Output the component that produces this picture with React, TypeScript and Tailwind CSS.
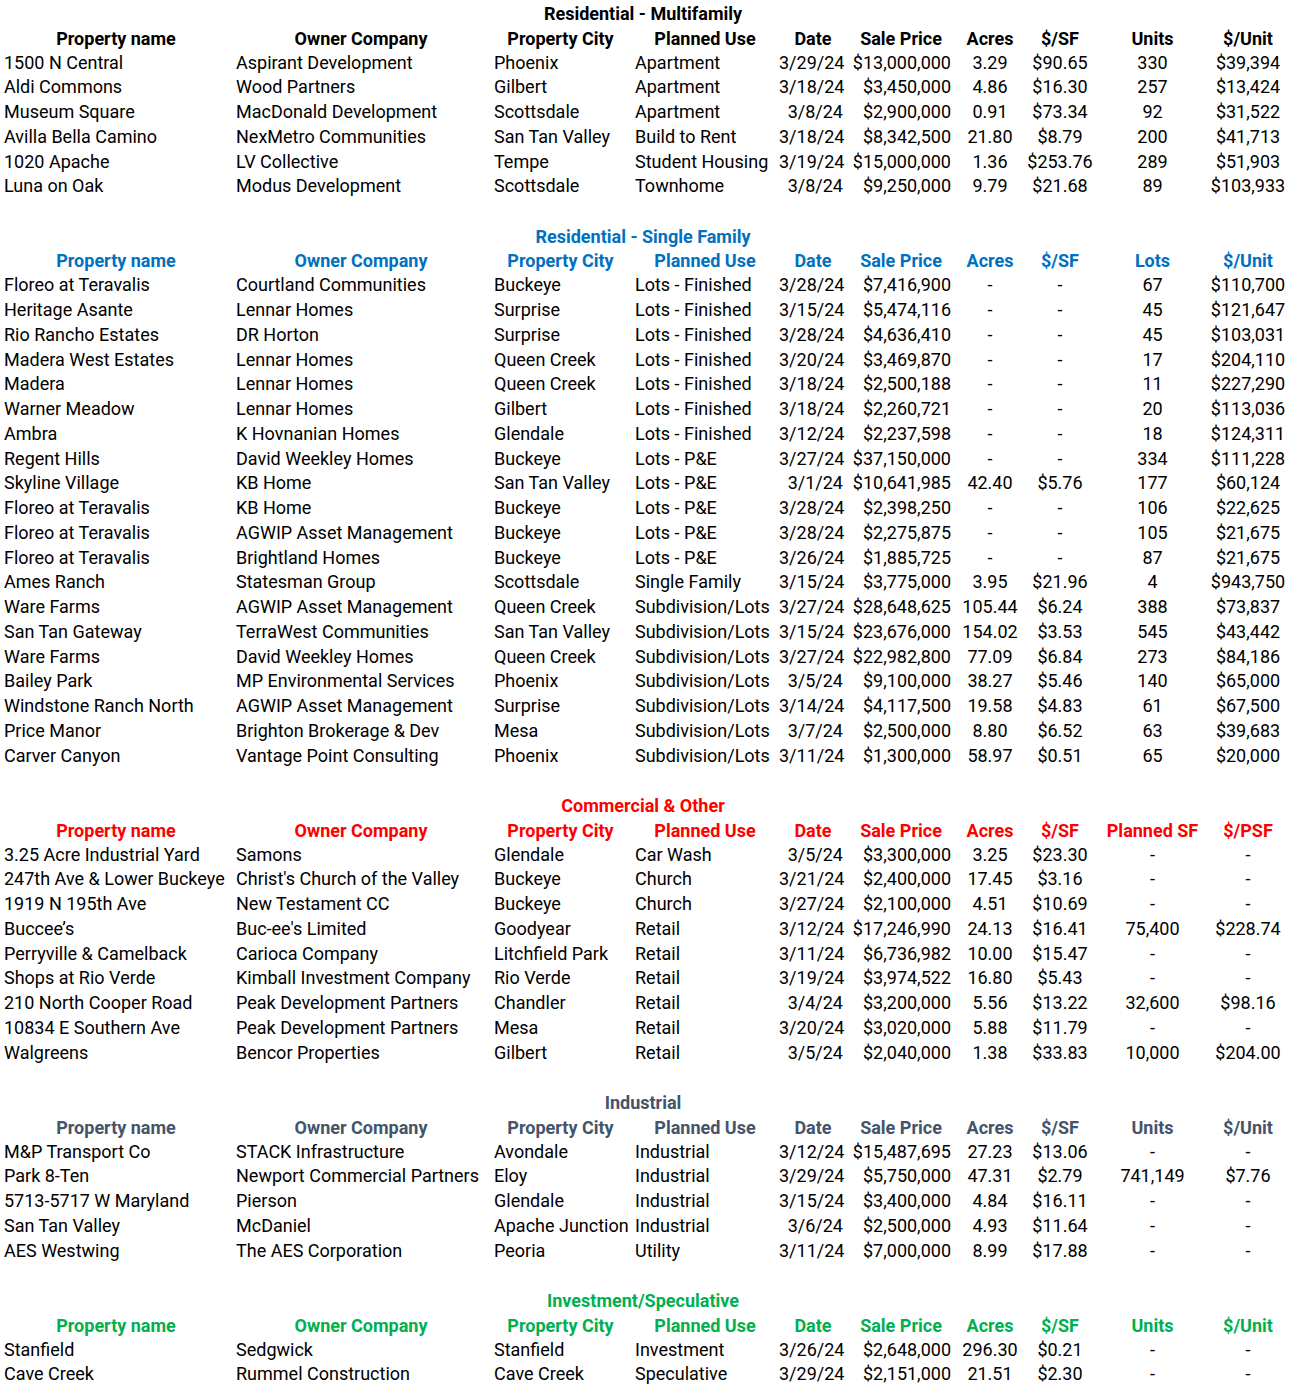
type Row = string[];

interface SectionProps {
  title: string;
  color: string;
  headers: string[];
  rows: Row[];
  last?: boolean;
}

const headersDefault = [
  'Property name',
  'Owner Company',
  'Property City',
  'Planned Use',
  'Date',
  'Sale Price',
  'Acres',
  '$/SF',
  'Units',
  '$/Unit',
];

const headersLots = [
  'Property name',
  'Owner Company',
  'Property City',
  'Planned Use',
  'Date',
  'Sale Price',
  'Acres',
  '$/SF',
  'Lots',
  '$/Unit',
];

const headersCommercial = [
  'Property name',
  'Owner Company',
  'Property City',
  'Planned Use',
  'Date',
  'Sale Price',
  'Acres',
  '$/SF',
  'Planned SF',
  '$/PSF',
];

// per-column alignment of data cells
const align = [
  'text-left pl-[4px]',
  'text-left pl-[4px]',
  'text-left pl-[4px]',
  'text-left pl-[4px]',
  'text-right pr-[4px]',
  'text-right pr-[4px]',
  'text-center',
  'text-center',
  'text-center',
  'text-center',
];

const multifamily: Row[] = [
  ['1500 N Central', 'Aspirant Development', 'Phoenix', 'Apartment', '3/29/24', '$13,000,000', '3.29', '$90.65', '330', '$39,394'],
  ['Aldi Commons', 'Wood Partners', 'Gilbert', 'Apartment', '3/18/24', '$3,450,000', '4.86', '$16.30', '257', '$13,424'],
  ['Museum Square', 'MacDonald Development', 'Scottsdale', 'Apartment', '3/8/24', '$2,900,000', '0.91', '$73.34', '92', '$31,522'],
  ['Avilla Bella Camino', 'NexMetro Communities', 'San Tan Valley', 'Build to Rent', '3/18/24', '$8,342,500', '21.80', '$8.79', '200', '$41,713'],
  ['1020 Apache', 'LV Collective', 'Tempe', 'Student Housing', '3/19/24', '$15,000,000', '1.36', '$253.76', '289', '$51,903'],
  ['Luna on Oak', 'Modus Development', 'Scottsdale', 'Townhome', '3/8/24', '$9,250,000', '9.79', '$21.68', '89', '$103,933'],
];

const singleFamily: Row[] = [
  ['Floreo at Teravalis', 'Courtland Communities', 'Buckeye', 'Lots - Finished', '3/28/24', '$7,416,900', '-', '-', '67', '$110,700'],
  ['Heritage Asante', 'Lennar Homes', 'Surprise', 'Lots - Finished', '3/15/24', '$5,474,116', '-', '-', '45', '$121,647'],
  ['Rio Rancho Estates', 'DR Horton', 'Surprise', 'Lots - Finished', '3/28/24', '$4,636,410', '-', '-', '45', '$103,031'],
  ['Madera West Estates', 'Lennar Homes', 'Queen Creek', 'Lots - Finished', '3/20/24', '$3,469,870', '-', '-', '17', '$204,110'],
  ['Madera', 'Lennar Homes', 'Queen Creek', 'Lots - Finished', '3/18/24', '$2,500,188', '-', '-', '11', '$227,290'],
  ['Warner Meadow', 'Lennar Homes', 'Gilbert', 'Lots - Finished', '3/18/24', '$2,260,721', '-', '-', '20', '$113,036'],
  ['Ambra', 'K Hovnanian Homes', 'Glendale', 'Lots - Finished', '3/12/24', '$2,237,598', '-', '-', '18', '$124,311'],
  ['Regent Hills', 'David Weekley Homes', 'Buckeye', 'Lots - P&E', '3/27/24', '$37,150,000', '-', '-', '334', '$111,228'],
  ['Skyline Village', 'KB Home', 'San Tan Valley', 'Lots - P&E', '3/1/24', '$10,641,985', '42.40', '$5.76', '177', '$60,124'],
  ['Floreo at Teravalis', 'KB Home', 'Buckeye', 'Lots - P&E', '3/28/24', '$2,398,250', '-', '-', '106', '$22,625'],
  ['Floreo at Teravalis', 'AGWIP Asset Management', 'Buckeye', 'Lots - P&E', '3/28/24', '$2,275,875', '-', '-', '105', '$21,675'],
  ['Floreo at Teravalis', 'Brightland Homes', 'Buckeye', 'Lots - P&E', '3/26/24', '$1,885,725', '-', '-', '87', '$21,675'],
  ['Ames Ranch', 'Statesman Group', 'Scottsdale', 'Single Family', '3/15/24', '$3,775,000', '3.95', '$21.96', '4', '$943,750'],
  ['Ware Farms', 'AGWIP Asset Management', 'Queen Creek', 'Subdivision/Lots', '3/27/24', '$28,648,625', '105.44', '$6.24', '388', '$73,837'],
  ['San Tan Gateway', 'TerraWest Communities', 'San Tan Valley', 'Subdivision/Lots', '3/15/24', '$23,676,000', '154.02', '$3.53', '545', '$43,442'],
  ['Ware Farms', 'David Weekley Homes', 'Queen Creek', 'Subdivision/Lots', '3/27/24', '$22,982,800', '77.09', '$6.84', '273', '$84,186'],
  ['Bailey Park', 'MP Environmental Services', 'Phoenix', 'Subdivision/Lots', '3/5/24', '$9,100,000', '38.27', '$5.46', '140', '$65,000'],
  ['Windstone Ranch North', 'AGWIP Asset Management', 'Surprise', 'Subdivision/Lots', '3/14/24', '$4,117,500', '19.58', '$4.83', '61', '$67,500'],
  ['Price Manor', 'Brighton Brokerage & Dev', 'Mesa', 'Subdivision/Lots', '3/7/24', '$2,500,000', '8.80', '$6.52', '63', '$39,683'],
  ['Carver Canyon', 'Vantage Point Consulting', 'Phoenix', 'Subdivision/Lots', '3/11/24', '$1,300,000', '58.97', '$0.51', '65', '$20,000'],
];

const commercial: Row[] = [
  ['3.25 Acre Industrial Yard', 'Samons', 'Glendale', 'Car Wash', '3/5/24', '$3,300,000', '3.25', '$23.30', '-', '-'],
  ['247th Ave & Lower Buckeye', "Christ's Church of the Valley", 'Buckeye', 'Church', '3/21/24', '$2,400,000', '17.45', '$3.16', '-', '-'],
  ['1919 N 195th Ave', 'New Testament CC', 'Buckeye', 'Church', '3/27/24', '$2,100,000', '4.51', '$10.69', '-', '-'],
  ['Buccee’s', "Buc-ee's Limited", 'Goodyear', 'Retail', '3/12/24', '$17,246,990', '24.13', '$16.41', '75,400', '$228.74'],
  ['Perryville & Camelback', 'Carioca Company', 'Litchfield Park', 'Retail', '3/11/24', '$6,736,982', '10.00', '$15.47', '-', '-'],
  ['Shops at Rio Verde', 'Kimball Investment Company', 'Rio Verde', 'Retail', '3/19/24', '$3,974,522', '16.80', '$5.43', '-', '-'],
  ['210 North Cooper Road', 'Peak Development Partners', 'Chandler', 'Retail', '3/4/24', '$3,200,000', '5.56', '$13.22', '32,600', '$98.16'],
  ['10834 E Southern Ave', 'Peak Development Partners', 'Mesa', 'Retail', '3/20/24', '$3,020,000', '5.88', '$11.79', '-', '-'],
  ['Walgreens', 'Bencor Properties', 'Gilbert', 'Retail', '3/5/24', '$2,040,000', '1.38', '$33.83', '10,000', '$204.00'],
];

const industrial: Row[] = [
  ['M&P Transport Co', 'STACK Infrastructure', 'Avondale', 'Industrial', '3/12/24', '$15,487,695', '27.23', '$13.06', '-', '-'],
  ['Park 8-Ten', 'Newport Commercial Partners', 'Eloy', 'Industrial', '3/29/24', '$5,750,000', '47.31', '$2.79', '741,149', '$7.76'],
  ['5713-5717 W Maryland', 'Pierson', 'Glendale', 'Industrial', '3/15/24', '$3,400,000', '4.84', '$16.11', '-', '-'],
  ['San Tan Valley', 'McDaniel', 'Apache Junction', 'Industrial', '3/6/24', '$2,500,000', '4.93', '$11.64', '-', '-'],
  ['AES Westwing', 'The AES Corporation', 'Peoria', 'Utility', '3/11/24', '$7,000,000', '8.99', '$17.88', '-', '-'],
];

const investment: Row[] = [
  ['Stanfield', 'Sedgwick', 'Stanfield', 'Investment', '3/26/24', '$2,648,000', '296.30', '$0.21', '-', '-'],
  ['Cave Creek', 'Rummel Construction', 'Cave Creek', 'Speculative', '3/29/24', '$2,151,000', '21.51', '$2.30', '-', '-'],
];

function Section({ title, color, headers, rows, last }: SectionProps) {
  return (
    <>
      {/* Title */}
      <div className={`col-span-10 h-[24.75px] flex items-center justify-center font-bold ${color}`}>
        {title}
      </div>

      {/* Header */}
      {headers.map((h, i) => (
        <div
          key={`h-${i}`}
          className={`h-[24.75px] flex items-center justify-center font-bold whitespace-nowrap ${color}`}
        >
          {h}
        </div>
      ))}

      {/* Data */}
      {rows.map((row, r) =>
        row.map((cell, c) => (
          <div
            key={`${r}-${c}`}
            className={`h-[24.75px] leading-[24.75px] whitespace-nowrap text-black ${align[c]}`}
          >
            {cell}
          </div>
        ))
      )}

      {!last && <div className="col-span-10 h-[24.75px]" />}
    </>
  );
}

export default function App() {
  return (
    <div className="w-[1292px] h-[1386px] bg-white overflow-hidden pt-[1px] font-['Roboto',sans-serif] text-[18px]">
      <div className="grid grid-cols-[232px_258px_141px_148px_68px_108px_70px_70px_115px_76px]">
        <Section title="Residential - Multifamily" color="text-black" headers={headersDefault} rows={multifamily} />
        <Section title="Residential - Single Family" color="text-[#0070C0]" headers={headersLots} rows={singleFamily} />
        <Section title="Commercial & Other" color="text-[#FF0000]" headers={headersCommercial} rows={commercial} />
        <Section title="Industrial" color="text-[#44546A]" headers={headersDefault} rows={industrial} />
        <Section title="Investment/Speculative" color="text-[#00B050]" headers={headersDefault} rows={investment} last />
      </div>
    </div>
  );
}
